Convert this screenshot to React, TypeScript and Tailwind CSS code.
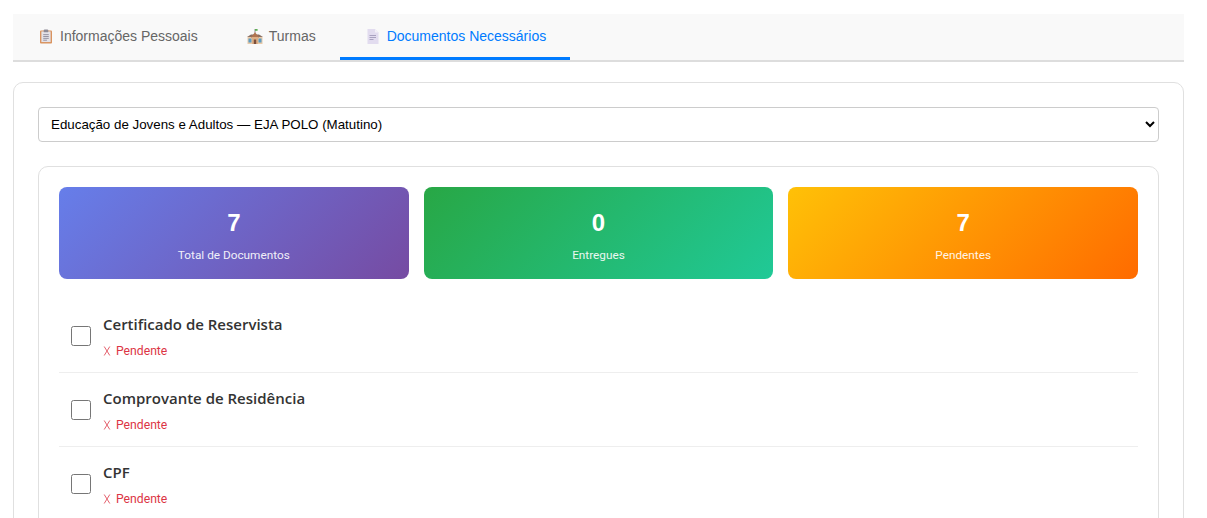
import { useState } from 'react'

function ClipboardIcon() {
  return (
    <svg width="12" height="15" viewBox="0 0 13 15">
      <rect x="0" y="1" width="13" height="14" rx="1" fill="#d9935f" />
      <rect x="1.5" y="2" width="10" height="11.5" fill="#e4e2e8" />
      <rect x="4" y="0" width="5" height="3" rx="1" fill="#8d8a96" />
      <path d="M3.5 5.5h6M3.5 7.5h6M3.5 9.5h6M3.5 11.5h4" stroke="#8f8c9c" strokeWidth="1" />
    </svg>
  )
}

function SchoolIcon() {
  return (
    <svg width="16" height="15" viewBox="0 0 16 15">
      <path d="M8 0v4" stroke="#777777" strokeWidth="0.8" />
      <path d="M8 0h2.6v1.8H8z" fill="#5fae57" />
      <path d="M0 8l4-2.5h8L16 8z" fill="#8a6f62" />
      <rect x="0.5" y="8" width="15" height="7" fill="#e9caa8" />
      <path d="M3.8 8.5L8 3.2l4.200 5.300z" fill="#b0734f" />
      <rect x="5" y="8" width="6" height="7" fill="#dcae86" />
      <rect x="1.500" y="9.500" width="3" height="4" fill="#5c9cc4" />
      <rect x="11.500" y="9.500" width="3" height="4" fill="#5c9cc4" />
      <rect x="6.800" y="10.500" width="2.400" height="4.500" fill="#7a4f3c" />
    </svg>
  )
}

function PageIcon() {
  return (
    <svg width="12" height="15" viewBox="0 0 12 15">
      <path d="M0.500 0h7.500l3.500 3.500V15H0.500z" fill="#e2dcef" />
      <path d="M8 0l3.500 3.500H8z" fill="#f3f0f8" />
      <path d="M2.500 6.500h6.500M2.500 8.500h6.500M2.500 10.500h4" stroke="#a9a2c0" strokeWidth="1" />
    </svg>
  )
}

function CrossIcon() {
  return (
    <svg width="8" height="10" viewBox="0 0 8 10" className="shrink-0">
      <path d="M1.200 0.500l5.600 9M6.800 0.500l-5.600 9" stroke="#e4606d" strokeWidth="1" fill="none" />
    </svg>
  )
}

const tabs = [
  { label: 'Informações Pessoais', icon: ClipboardIcon },
  { label: 'Turmas', icon: SchoolIcon },
  { label: 'Documentos Necessários', icon: PageIcon },
]

const stats = [
  { value: 7, label: 'Total de Documentos', className: 'bg-[linear-gradient(135deg,#667eea,#764ba2)]' },
  { value: 0, label: 'Entregues', className: 'bg-[linear-gradient(135deg,#28a745,#20c997)]' },
  { value: 7, label: 'Pendentes', className: 'bg-[linear-gradient(135deg,#ffc107,#ff6b00)]' },
]

const documents = ['Certificado de Reservista', 'Comprovante de Residência', 'CPF']

export default function App() {
  const [active, setActive] = useState(2)

  return (
    <div className="h-[518px] overflow-hidden bg-white pl-[13px] pr-[23px] pt-[14px] font-['Liberation_Sans',sans-serif]">
      {/* Tabs */}
      <div className="flex h-[48px] border-b-2 border-[#dddddd] bg-[#f9f9f9]">
        {tabs.map((tab, idx) => (
          <button
            key={tab.label}
            onClick={() => setActive(idx)}
            className={`flex h-[46px] items-center gap-[5px] border-b-[3px] px-[24px] pt-[2px] text-[14px] ${
              active === idx ? 'border-[#007bff] text-[#007bff]' : 'border-transparent text-[#666666]'
            }`}
          >
            <span className="flex w-[18px] justify-center">
              <tab.icon />
            </span>
            {tab.label}
          </button>
        ))}
      </div>

      {/* Card */}
      <div className="mt-[20px] rounded-[10px] border border-[#e0e0e0] bg-white px-[24px] pt-[24px]">
        <select className="h-[35px] w-full rounded-[4px] border border-[#cccccc] bg-white px-[8px] text-[13.33px] text-black">
          <option>Educação de Jovens e Adultos — EJA POLO (Matutino)</option>
        </select>

        <div className="mt-[24px] rounded-[10px] border border-[#e0e0e0] p-[20px] font-['Roboto',sans-serif]">
          <div className="grid grid-cols-3 gap-[15px]">
            {stats.map((stat) => (
              <div
                key={stat.label}
                className={`flex h-[92px] flex-col items-center rounded-[8px] pt-[20px] text-white ${stat.className}`}
              >
                <div className="font-['Liberation_Sans',sans-serif] text-[24px] font-bold leading-[32px]">{stat.value}</div>
                <div className="mt-[8px] text-[11.8px] leading-[16px] opacity-90">{stat.label}</div>
              </div>
            ))}
          </div>

          <div className="mt-[20px]">
            {documents.map((doc) => (
              <div key={doc} className="flex h-[74px] items-center gap-[12px] border-b border-[#eeeeee] pl-[12px]">
                <input type="checkbox" className="h-[20px] w-[20px] shrink-0" />
                <div className="pt-[2px]">
                  <div className="font-['Open_Sans',sans-serif] text-[15px] font-semibold leading-[20px] text-[#333333]">{doc}</div>
                  <div className="mt-[9px] flex items-center gap-[5px] text-[12.2px] leading-[16px] text-[#dc3545]">
                    <CrossIcon />
                    Pendente
                  </div>
                </div>
              </div>
            ))}
          </div>
        </div>
      </div>
    </div>
  )
}
